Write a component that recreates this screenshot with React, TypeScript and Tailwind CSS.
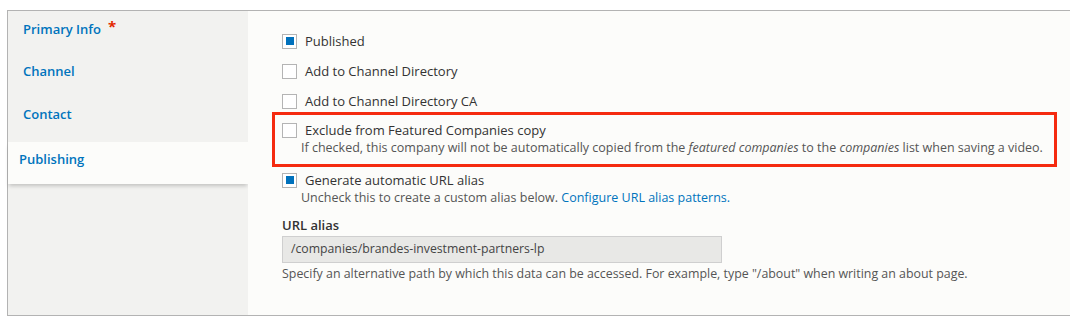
import React from "react";

const font = { fontFamily: '"Open Sans", "Noto Sans", Arial, sans-serif' };

function Checkbox({ checked }: { checked?: boolean }) {
  return (
    <span className="w-[15px] h-[15px] border border-[#b4b4b4] bg-white flex items-center justify-center shrink-0">
      {checked ? <span className="w-[8px] h-[8px] bg-[#0071bc]" /> : null}
    </span>
  );
}

function Item({ label, checked }: { label: string; checked?: boolean }) {
  return (
    <div className="flex items-center gap-[8px] leading-[18px] text-[13px] text-[#333]">
      <Checkbox checked={checked} />
      <span>{label}</span>
    </div>
  );
}

export default function App() {
  return (
    <div className="w-[1070px] h-[326px] bg-white overflow-hidden pl-[7px] pt-[10px]" style={font}>
      <div className="w-[1070px] h-[306px] border border-[#b3b3b3] flex">
        <div className="w-[240px] bg-[#f2f2f0] flex flex-col shrink-0">
          <div className="h-[43px] pl-[15px] pt-[9px] text-[13px] leading-[18px] font-semibold text-[#0074bd] flex items-start">
            <span>Primary Info</span>
            <span className="ml-[7px] text-[#e32700] text-[15px] leading-[12px] font-bold">*</span>
          </div>
          <div className="h-[43px] pl-[15px] pt-[8px] text-[13px] leading-[18px] font-semibold text-[#0074bd]">Channel</div>
          <div className="h-[43px] pl-[15px] pt-[8px] text-[13px] leading-[18px] font-semibold text-[#0074bd]">Contact</div>
          <div className="mt-[2px] h-[42px] pl-[11px] pt-[8px] text-[13px] leading-[18px] font-semibold text-[#0074bd] bg-[#fcfcfa] shadow-[0_3px_4px_-1px_rgba(0,0,0,0.2)]">
            Publishing
          </div>
        </div>
        <div className="flex-1 bg-[#fcfcfa] pl-[34px] pt-[21px] flex flex-col">
          <Item label="Published" checked />
          <div className="mt-[12px]"><Item label="Add to Channel Directory" /></div>
          <div className="mt-[12px]"><Item label="Add to Channel Directory CA" /></div>
          <div className="mt-[11px] relative">
            <Item label="Exclude from Featured Companies copy" />
            <div className="pl-[19px] text-[12.5px] leading-[18px] text-[#555]">
              If checked, this company will not be automatically copied from the <em>featured companies</em> to the <em>companies</em> list when saving a video.
            </div>
            <div className="absolute left-[-10px] top-[-9px] right-[19px] bottom-[-10px] border-[3px] border-[#f52a0f]" />
          </div>
          <div className="mt-[14px]">
            <Item label="Generate automatic URL alias" checked />
            <div className="pl-[19px] text-[12.5px] leading-[18px] text-[#555]">
              Uncheck this to create a custom alias below. <span className="text-[#0074bd]">Configure URL alias patterns.</span>
            </div>
          </div>
          <div className="mt-[9px] text-[13px] leading-[18px] font-semibold text-[#333]">URL alias</div>
          <div className="mt-[2px] w-[440px] h-[27px] border border-[#cfcfcf] bg-[#e8e8e6] pl-[8px] flex items-center text-[12.25px] text-[#444]">
            /companies/brandes-investment-partners-lp
          </div>
          <div className="mt-[2px] text-[12.4px] leading-[18px] text-[#555]">
            Specify an alternative path by which this data can be accessed. For example, type "/about" when writing an about page.
          </div>
        </div>
      </div>
    </div>
  );
}
